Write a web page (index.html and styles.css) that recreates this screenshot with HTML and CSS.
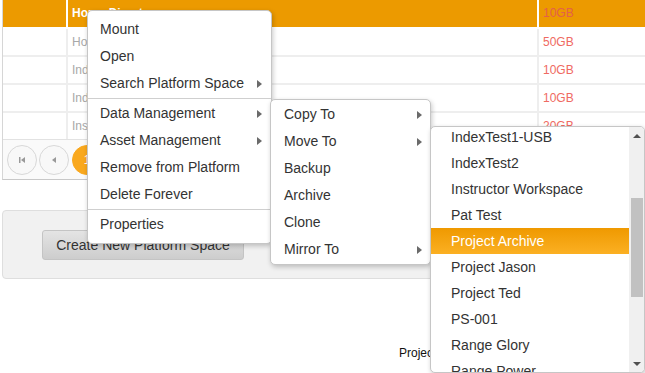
FILE: index.html
```html
<!DOCTYPE html>
<html lang="en">
<head>
    <meta charset="UTF-8">
    <title>Platform Spaces</title>
    <link rel="stylesheet" href="styles.css">
</head>
<body>

<!-- Spaces Grid -->
<div class="grid-wrap">
    <div class="row head">
        <div class="cell"></div>
        <div class="cell name">Home Directory</div>
        <div class="cell size">10GB</div>
    </div>
    <div class="row">
        <div class="cell"></div>
        <div class="cell name">Home Projects</div>
        <div class="cell size">50GB</div>
    </div>
    <div class="row">
        <div class="cell"></div>
        <div class="cell name">IndexTest1-USB</div>
        <div class="cell size">10GB</div>
    </div>
    <div class="row">
        <div class="cell"></div>
        <div class="cell name">IndexTest2</div>
        <div class="cell size">10GB</div>
    </div>
    <div class="row last">
        <div class="cell"></div>
        <div class="cell name">Instructor Workspace</div>
        <div class="cell size">20GB</div>
    </div>
    <div class="pager">
        <button class="page-btn">
            <svg width="8" height="8" viewBox="0 0 8 8"><rect x="1" y="1" width="1.5" height="6" fill="#999"/><polygon points="7,1 7,7 3,4" fill="#999"/></svg>
        </button>
        <button class="page-btn">
            <svg width="8" height="8" viewBox="0 0 8 8"><polygon points="6,1 6,7 2,4" fill="#999"/></svg>
        </button>
        <button class="page-btn current">1</button>
        <button class="page-btn">2</button>
    </div>
</div>

<!-- Actions Panel -->
<div class="panel">
    <button class="create-btn">Create New Platform Space</button>
</div>

<div class="footer">Project Platform Manager</div>

<!-- Context Menu -->
<ul class="menu main-menu">
    <li>Mount</li>
    <li>Open</li>
    <li class="has-sub">Search Platform Space <span class="arrow"></span></li>
    <li class="sep"></li>
    <li class="has-sub">Data Management <span class="arrow"></span></li>
    <li class="has-sub">Asset Management <span class="arrow"></span></li>
    <li>Remove from Platform</li>
    <li>Delete Forever</li>
    <li class="sep"></li>
    <li>Properties</li>
</ul>

<ul class="menu data-menu">
    <li class="has-sub">Copy To <span class="arrow"></span></li>
    <li class="has-sub">Move To <span class="arrow"></span></li>
    <li>Backup</li>
    <li>Archive</li>
    <li>Clone</li>
    <li class="has-sub">Mirror To <span class="arrow"></span></li>
</ul>

<div class="menu space-menu">
    <ul class="space-list">
        <li>IndexTest1-USB</li>
        <li>IndexTest2</li>
        <li>Instructor Workspace</li>
        <li>Pat Test</li>
        <li class="active">Project Archive</li>
        <li>Project Jason</li>
        <li>Project Ted</li>
        <li>PS-001</li>
        <li>Range Glory</li>
        <li>Range Power</li>
    </ul>
    <div class="scrollbar">
        <div class="sb-btn"><span class="up"></span></div>
        <div class="sb-track"><div class="sb-thumb"></div></div>
        <div class="sb-btn"><span class="down"></span></div>
    </div>
</div>

</body>
</html>
```

FILE: styles.css
```css
* {
    margin: 0;
    padding: 0;
    box-sizing: border-box;
}
body {
    font-family: 'Liberation Sans', Arial, sans-serif;
    background-color: #fff;
    color: #333;
    width: 645px;
    height: 373px;
    overflow: hidden;
    position: relative;
}
.grid-wrap {
    margin-left: 2px;
    border-left: 1px solid #d6d6d6;
    border-bottom: 1px solid #c8c8c8;
}
.row {
    display: grid;
    grid-template-columns: 63px 469px 1fr;
    column-gap: 2px;
    background-color: #eee;
    padding-bottom: 2px;
    font-size: 12px;
}
.row .cell {
    height: 26px;
    line-height: 26px;
    padding-left: 4px;
    background-color: #fff;
    white-space: nowrap;
    overflow: hidden;
}
.row.head {
    background-color: #fff;
}
.row.head .cell {
    height: 27px;
    line-height: 27px;
    background-color: #ec9a00;
}
.row.last {
    padding-bottom: 0;
}
.cell.name {
    color: #a8a8a8;
}
.row.head .cell.name {
    color: #fff;
    font-weight: bold;
}
.cell.size {
    color: #ef6a62;
}
.row.head .cell.size {
    color: #e4604a;
}
.pager {
    display: flex;
    gap: 2px;
    height: 40px;
    padding: 5px 0 0 4px;
    border-top: 1px solid #e2e2e2;
    background-color: #fafafa;
}
.page-btn {
    width: 30px;
    height: 30px;
    border-radius: 50%;
    border: 1px solid #d8d8d8;
    background-color: #f8f8f8;
    display: flex;
    align-items: center;
    justify-content: center;
    font-family: 'Liberation Sans', Arial, sans-serif;
    font-size: 12px;
    color: #666;
}
.page-btn.current {
    margin-left: 1px;
    background-color: #f9a81e;
    border-color: #f9a81e;
    color: #fff;
}
.panel {
    margin: 30px 0 0 2px;
    height: 69px;
    padding: 19px 0 0 39px;
    background-color: #f1f1f1;
    border: 1px solid #dedede;
    border-radius: 4px;
}
.create-btn {
    width: 202px;
    height: 30px;
    font-family: 'Liberation Sans', Arial, sans-serif;
    font-size: 14px;
    color: #333;
    background: linear-gradient(#e4e4e4, #cdcdcd);
    border: 1px solid #c4c4c4;
    border-radius: 3px;
}
.footer {
    margin-top: 67px;
    padding-left: 399px;
    font-size: 12px;
    color: #111;
    white-space: nowrap;
}

/* Menus */
.menu {
    position: absolute;
    list-style: none;
    background-color: #fff;
    border: 1px solid #c6c6c6;
    border-radius: 5px;
    box-shadow: 1px 2px 5px rgba(0, 0, 0, 0.22);
    font-size: 14px;
    color: #333;
}
.menu li {
    height: 27px;
    line-height: 27px;
    white-space: nowrap;
    display: flex;
    align-items: center;
    justify-content: space-between;
}
.menu li.sep {
    height: 1px;
    margin: 1px 0;
    background-color: #cfcfcf;
}
.arrow {
    width: 0;
    height: 0;
    border-left: 5px solid #6a6a6a;
    border-top: 4px solid transparent;
    border-bottom: 4px solid transparent;
}
.main-menu {
    left: 87px;
    top: 10px;
    width: 185px;
    padding: 5px 0;
}
.main-menu li {
    padding: 0 9px 0 12px;
}
.data-menu {
    left: 270px;
    top: 99px;
    width: 161px;
    padding: 1px 0;
}
.data-menu li {
    padding: 0 8px 0 13px;
}
.space-menu {
    left: 430px;
    top: 126px;
    width: 215px;
    height: 247px;
    display: flex;
    overflow: hidden;
}
.space-list {
    flex: 1;
    list-style: none;
    margin-top: -3px;
}
.space-menu .space-list li {
    height: 26px;
    line-height: 26px;
    padding-left: 20px;
}
.space-list li.active {
    color: #fff;
    background: linear-gradient(#ef9900, #fbb023);
}
.scrollbar {
    width: 15px;
    display: flex;
    flex-direction: column;
    background-color: #f0f0f0;
}
.sb-btn {
    height: 17px;
    display: flex;
    align-items: center;
    justify-content: center;
}
.sb-btn .up {
    border-bottom: 4px solid #505050;
    border-left: 4px solid transparent;
    border-right: 4px solid transparent;
}
.sb-btn .down {
    border-top: 4px solid #505050;
    border-left: 4px solid transparent;
    border-right: 4px solid transparent;
}
.sb-track {
    flex: 1;
    padding: 54px 1px 0 2px;
}
.sb-thumb {
    height: 99px;
    background-color: #c1c1c1;
}
```
